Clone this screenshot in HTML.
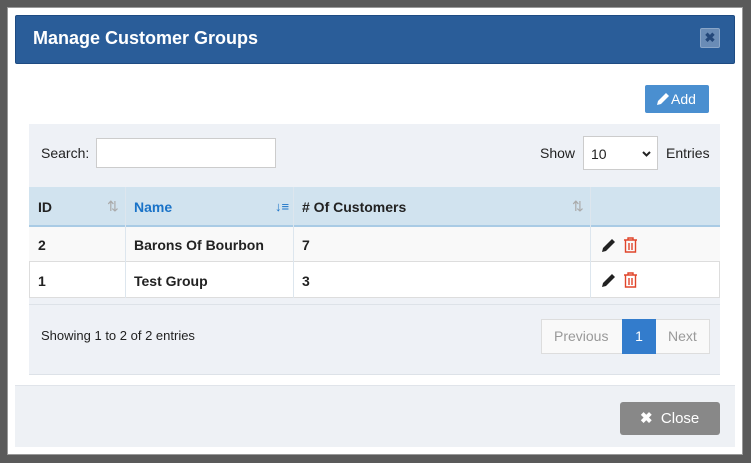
<!DOCTYPE html>
<html><head><style>
*{box-sizing:border-box;margin:0;padding:0}
body{width:751px;height:463px;background:#5a5a5a;font-family:"Liberation Sans",sans-serif;position:relative;overflow:hidden;font-size:14px;color:#222}
.a{position:absolute}
</style></head><body>
<div class="a" style="left:7px;top:7px;width:736px;height:448px;background:#fff;border:1px solid #999"></div>
<div class="a" style="left:15px;top:15px;width:720px;height:49px;background:#2a5d99;border:1px solid #1e4b82;border-radius:2px"></div>
<div class="a" style="left:33px;top:28px;color:#fff;font-weight:bold;font-size:18px">Manage Customer Groups</div>
<div class="a" style="left:700px;top:28px;width:20px;height:20px;background:#6a8cb6;border:1px solid #8aa6c8;border-radius:2px;color:#24487a;font-weight:bold;font-size:13px;text-align:center;line-height:18px">✖</div>
<div class="a" style="left:645px;top:85px;width:64px;height:28px;background:#4a8fd0;border-radius:2px;color:#fff;font-size:14px;line-height:28px;padding-left:10px">
<svg width="16" height="16" viewBox="0 0 16 16" style="vertical-align:-3px"><path d="M2 14 L3 10 L11 2 L14 5 L6 13 Z" fill="#fff"/></svg>Add</div>
<div class="a" style="left:29px;top:124px;width:691px;height:251px;background:#eef1f6"></div>
<div class="a" style="left:41px;top:145px">Search:</div>
<div class="a" style="left:96px;top:138px;width:180px;height:30px;background:#fff;border:1px solid #ccc"></div>
<div class="a" style="left:540px;top:145px">Show</div>
<div class="a" style="left:583px;top:136px;width:75px;height:34px;background:#fff;border:1px solid #ccc;padding:9px 0 0 7px">10<svg style="position:absolute;right:6px;top:14px" width="9" height="6" viewBox="0 0 9 6"><path d="M1 1 L4.5 4.5 L8 1" fill="none" stroke="#222" stroke-width="2"/></svg></div>
<div class="a" style="left:666px;top:145px">Entries</div>
<!-- table -->
<div class="a" style="left:29px;top:187px;width:691px;height:111px;background:#fff;border:1px solid #ddd"></div>
<div class="a" style="left:29px;top:187px;width:691px;height:38px;background:#d1e3ef"></div>
<div class="a" style="left:29px;top:225px;width:691px;height:2px;background:#a9cbe5"></div>
<div class="a" style="left:29px;top:227px;width:691px;height:35px;background:#f9f9f9;border-bottom:1px solid #ddd"></div>
<div class="a" style="left:125px;top:187px;width:1px;height:111px;background:#dde6ee"></div>
<div class="a" style="left:293px;top:187px;width:1px;height:111px;background:#dde6ee"></div>
<div class="a" style="left:590px;top:187px;width:1px;height:111px;background:#dde6ee"></div>
<div class="a" style="left:38px;top:199px;font-weight:bold">ID</div>
<div class="a" style="left:107px;top:198px;color:#aaa;font-size:14px">⇅</div>
<div class="a" style="left:134px;top:199px;font-weight:bold;color:#1a73c8">Name</div>
<div class="a" style="left:275px;top:199px;color:#1a73c8;font-size:13px;font-weight:bold">↓≡</div>
<div class="a" style="left:302px;top:199px;font-weight:bold">#&nbsp;Of Customers</div>
<div class="a" style="left:572px;top:198px;color:#aaa;font-size:14px">⇅</div>
<div class="a" style="left:38px;top:237px;font-weight:bold">2</div>
<div class="a" style="left:134px;top:237px;font-weight:bold">Barons Of Bourbon</div>
<div class="a" style="left:302px;top:237px;font-weight:bold">7</div>
<div class="a" style="left:38px;top:273px;font-weight:bold">1</div>
<div class="a" style="left:134px;top:273px;font-weight:bold">Test Group</div>
<div class="a" style="left:302px;top:273px;font-weight:bold">3</div>
<svg class="a" style="left:601px;top:236px" width="40" height="17" viewBox="0 0 40 17"><path d="M1 16 L2 12 L11 3 L14 6 L5 15 Z" fill="#222"/><g fill="none" stroke="#e0452a" stroke-width="1.4"><path d="M23 4 H36 M27 4 V2 H32 V4 M24.5 4 V16 H34.5 V4 M28 7 V14 M31 7 V14"/></g></svg>
<svg class="a" style="left:601px;top:271px" width="40" height="17" viewBox="0 0 40 17"><path d="M1 16 L2 12 L11 3 L14 6 L5 15 Z" fill="#222"/><g fill="none" stroke="#e0452a" stroke-width="1.4"><path d="M23 4 H36 M27 4 V2 H32 V4 M24.5 4 V16 H34.5 V4 M28 7 V14 M31 7 V14"/></g></svg>
<div class="a" style="left:29px;top:304px;width:691px;height:1px;background:#dde2e8"></div>
<div class="a" style="left:29px;top:374px;width:691px;height:1px;background:#dde2e8"></div>
<div class="a" style="left:41px;top:328px;font-size:13px">Showing 1 to 2 of 2 entries</div>
<div class="a" style="left:541px;top:319px;width:169px;height:35px;border:1px solid #ddd;background:#f9f9f9"></div>
<div class="a" style="left:554px;top:328px;color:#999">Previous</div>
<div class="a" style="left:622px;top:319px;width:34px;height:35px;background:#337ccc;color:#fff;text-align:center;line-height:35px">1</div>
<div class="a" style="left:668px;top:328px;color:#999">Next</div>
<div class="a" style="left:15px;top:385px;width:720px;height:62px;background:#eef1f5;border-top:1px solid #e0e4ea"></div>
<div class="a" style="left:620px;top:402px;width:100px;height:33px;background:#888;border-radius:3px;color:#fff;font-size:15px;line-height:33px;padding-left:20px"><b>✖</b>&nbsp; Close</div>
</body></html>
